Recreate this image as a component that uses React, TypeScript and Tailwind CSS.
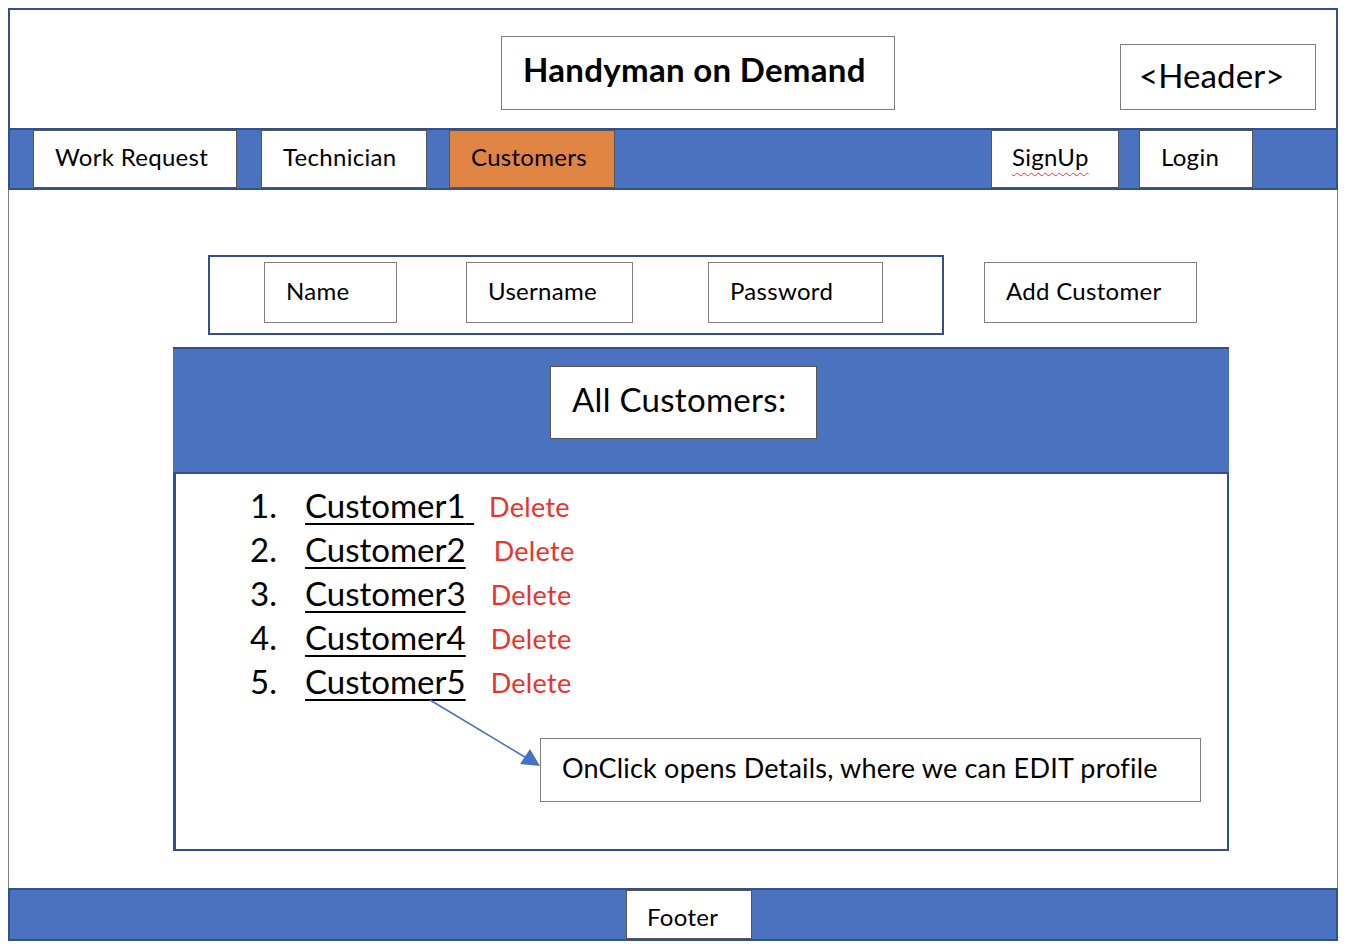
import React from 'react';

const font = { fontFamily: 'Lato, "Noto Sans", sans-serif' };

const customers = ['Customer1', 'Customer2', 'Customer3', 'Customer4', 'Customer5'];

export default function App() {
  return (
    <div className="w-[1348px] h-[950px] bg-white text-black pt-2" style={font}>
      {/* Header */}
      <div className="ml-2 w-[1330px] h-[120px] border-2 border-b-0 border-[#2f528f] flex items-start">
        <div className="ml-[491px] mt-[26px] w-[394px] h-[74px] border border-[#7f7f7f] flex items-center pl-[21px] pb-[6px]">
          <span className="text-[33px] font-bold tracking-[0.3px]">Handyman on Demand</span>
        </div>
        <div className="ml-auto mr-[20px] mt-[34px] w-[196px] h-[66px] border border-[#7f7f7f] flex items-center pl-[18px] pb-[2px]">
          <span className="text-[33px] tracking-[0.1px]">&lt;Header&gt;</span>
        </div>
      </div>

      {/* Nav */}
      <div className="ml-2 w-[1330px] h-[62px] bg-[#4a72be] border-2 border-[#2f528f] flex items-stretch text-[24px] tracking-[0.3px]">
        <button className="ml-[23px] w-[204px] bg-white border border-[#555] flex items-center pl-[21px] pb-[5px]">Work Request</button>
        <button className="ml-[24px] w-[166px] bg-white border border-[#555] flex items-center pl-[21px] pb-[5px]">Technician</button>
        <button className="ml-[22px] w-[166px] bg-[#e08444] border border-[#555] flex items-center pl-[21px] pb-[5px]">Customers</button>
        <button className="ml-[376px] w-[128px] bg-white border border-[#555] flex items-center pl-[20px] pb-[5px]">
          <span className="underline decoration-wavy decoration-red-500 decoration-1 underline-offset-[6px]">SignUp</span>
        </button>
        <button className="ml-[20px] w-[114px] bg-white border border-[#555] flex items-center pl-[21px] pb-[5px]">Login</button>
      </div>

      {/* Main */}
      <div className="ml-2 w-[1330px] h-[698px] border-x border-[#7f7f7f] flex flex-col">
        <div className="mt-[65px] flex items-start text-[24px] tracking-[0.3px]">
          <div className="ml-[199px] w-[736px] h-[80px] border-2 border-[#2f528f] flex items-start">
            <div className="ml-[54px] mt-[5px] w-[133px] h-[61px] border border-[#7f7f7f] flex items-center pl-[21px] pb-[4px]">Name</div>
            <div className="ml-[69px] mt-[5px] w-[167px] h-[61px] border border-[#7f7f7f] flex items-center pl-[21px] pb-[4px]">Username</div>
            <div className="ml-[75px] mt-[5px] w-[175px] h-[61px] border border-[#7f7f7f] flex items-center pl-[21px] pb-[4px]">Password</div>
          </div>
          <div className="ml-[40px] mt-[7px] w-[213px] h-[61px] border border-[#7f7f7f] flex items-center pl-[21px] pb-[4px]">Add Customer</div>
        </div>

        <div className="ml-[164px] mt-[12px] w-[1056px] h-[504px] border-2 border-[#2f528f] border-t-0 flex flex-col">
          <div className="h-[127px] bg-[#4a72be] border-t-2 border-b-2 border-[#2f528f] -mx-[2px] px-[2px] flex items-start">
            <div className="ml-[375px] mt-[17px] w-[267px] h-[73px] bg-white border border-[#555] flex items-center pl-[21px] pb-[6px]">
              <span className="text-[33px] tracking-[0.3px]">All Customers:</span>
            </div>
          </div>
          <div className="relative flex-1 border-l border-[#2f528f]">
            <div className="pt-[10px] pl-[74px] flex flex-col">
              {customers.map((c, i) => (
                <div key={c} className="h-[44px] flex items-center">
                  <span className="w-[55px] text-[33px]">{i + 1}.</span>
                  <span className="text-[33px] underline decoration-2 underline-offset-[5px]">
                    {c}{i === 0 ? '\u00a0' : ''}
                  </span>
                  <span className={`${i === 0 ? 'ml-[15px]' : i === 1 ? 'ml-[28px]' : 'ml-[25px]'} mt-[3px] text-[27px] tracking-[0.3px] text-[#e8342a]`}>Delete</span>
                </div>
              ))}
            </div>
            <svg className="absolute left-0 top-0" width="400" height="320">
              <line x1="254" y1="226" x2="352" y2="285" stroke="#4472c4" strokeWidth="1.5" />
              <polygon points="364,292 344,290 354,275" fill="#4472c4" />
            </svg>
            <div className="absolute left-[364px] top-[264px] w-[661px] h-[64px] border border-[#7f7f7f] bg-white flex items-center pl-[21px] pb-[4px]">
              <span className="text-[27px] tracking-[0.2px]">OnClick opens Details, where we can EDIT profile</span>
            </div>
          </div>
        </div>
      </div>

      {/* Footer */}
      <div className="ml-2 w-[1330px] h-[53px] bg-[#4a72be] border-2 border-[#2f528f] flex items-stretch">
        <div className="ml-[616px] w-[126px] bg-white border border-[#555] flex items-center pl-[20px] pt-[4px] text-[24px] tracking-[0.3px]">Footer</div>
      </div>
    </div>
  );
}
